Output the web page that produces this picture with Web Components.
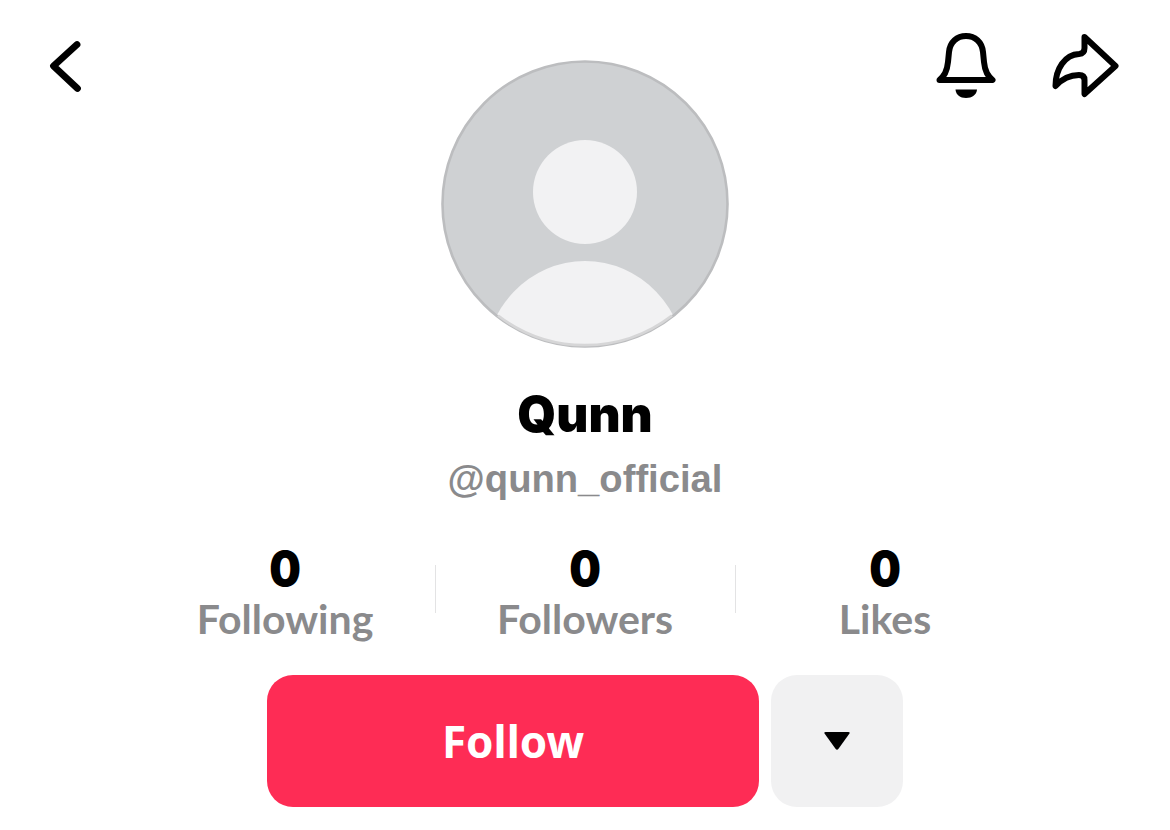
<!DOCTYPE html>
<html lang="en">
<head>
<meta charset="utf-8">
<title>Qunn</title>
<style>
    html, body { margin: 0; background: #fff; }
</style>
</head>
<body>
<profile-page>
    <profile-header slot="header"></profile-header>
    <profile-identity slot="identity" name="Qunn" handle="@qunn_official"></profile-identity>
    <profile-stats slot="stats">
        <stat-item count="0" label="Following"></stat-item>
        <stat-item count="0" label="Followers"></stat-item>
        <stat-item count="0" label="Likes"></stat-item>
    </profile-stats>
    <follow-actions slot="actions"></follow-actions>
</profile-page>
<script>
/**
 * Page shell, stacks the profile sections.
 */
class ProfilePage extends HTMLElement {
    constructor() {
        super();
        this.attachShadow({ mode: 'open' });
    }

    connectedCallback() {
        this.shadowRoot.innerHTML = `
            <style>
                :host {
                    display: flex;
                    flex-direction: column;
                    align-items: center;
                    width: 1170px;
                    height: 830px;
                    overflow: hidden;
                }
            </style>
            <slot name="header"></slot>
            <slot name="identity"></slot>
            <slot name="stats"></slot>
            <slot name="actions"></slot>
        `;
    }
}

/**
 * Top area: back button, avatar, bell and share.
 */
class ProfileHeader extends HTMLElement {
    constructor() {
        super();
        this.attachShadow({ mode: 'open' });
    }

    connectedCallback() {
        this.shadowRoot.innerHTML = `
            <style>
                :host {
                    display: grid;
                    grid-template-columns: 1fr 288px 1fr;
                    width: 100%;
                    padding-top: 60px;
                }
                .left, .right {
                    display: flex;
                    margin-top: -60px;
                    height: 130px;
                }
                svg { display: block; overflow: visible; }
                .left { padding: 41px 0 0 49px; }
                .right { justify-content: flex-end; padding: 33px 50px 0 0; gap: 54px; }
                .avatar { width: 288px; height: 288px; display: block; }
            </style>
            <div class="left">
                <svg width="34" height="50" viewBox="0 0 34 50" fill="none" stroke="#000" stroke-width="6.8" stroke-linecap="round" stroke-linejoin="round" aria-label="Back">
                    <path d="M28 3.500 L4.500 25 L28.500 47.500"/>
                </svg>
            </div>
            <svg class="avatar" viewBox="0 0 288 288" aria-label="Avatar">
                <defs><clipPath id="c"><circle cx="144" cy="144" r="142.500"/></clipPath></defs>
                <circle cx="144" cy="144" r="142.500" fill="#cfd1d3"/>
                <g clip-path="url(#c)" fill="#f2f2f3">
                    <circle cx="144" cy="132" r="52"/>
                    <ellipse cx="144" cy="307" rx="101" ry="106"/>
                </g>
                <circle cx="144" cy="144" r="142.500" fill="none" stroke="#bcbdbf" stroke-width="2.600"/>
                <path d="M57 255.500 A142.500 142.500 0 0 0 231 255.500" fill="none" stroke="#d6d6d7" stroke-width="2.800"/>
            </svg>
            <div class="right">
                <svg width="62" height="66" viewBox="0 0 62 66" fill="none" aria-label="Notifications">
                    <path d="M3.500 47 C8 43 11 39 12 29 L13 19 C14 9 21 3 30 3 C39 3 46 9 47 19 L48 29 C49 39 52 43 56.500 47 Z" stroke="#000" stroke-width="6" stroke-linejoin="round"/>
                    <path d="M19.500 56.500 H41 C40.500 62 36 65 30 65 C24 65 20 62 19.500 56.500 Z" fill="#000"/>
                </svg>
                <svg width="68" height="66" viewBox="0 0 68 66" fill="none" stroke="#000" stroke-width="6" stroke-linejoin="round" stroke-linecap="round" aria-label="Share">
                    <path d="M32.500 4 L63.500 33 L32.500 61 L32.500 47 Q32.500 42 27 42 C17 42 9 47 3.500 53 C3.500 36 13 21.500 27 21 Q32.500 20.500 32.500 15 Z"/>
                </svg>
            </div>
        `;
    }
}

/**
 * Display name and handle.
 */
class ProfileIdentity extends HTMLElement {
    constructor() {
        super();
        this.attachShadow({ mode: 'open' });
    }

    connectedCallback() {
        this.shadowRoot.innerHTML = `
            <style>
                :host {
                    display: flex;
                    flex-direction: column;
                    align-items: center;
                    padding-top: 37px;
                }
                .name {
                    font: 900 49.500px/58px Inter, sans-serif;
                    color: #000;
                }
                .handle {
                    font: 700 38.200px/46px "Liberation Sans", sans-serif;
                    color: #8a8a8c;
                    margin-top: 13px;
                }
            </style>
            <div class="name">${this.getAttribute('name')}</div>
            <div class="handle">${this.getAttribute('handle')}</div>
        `;
    }
}

/**
 * Row of three counters.
 */
class ProfileStats extends HTMLElement {
    constructor() {
        super();
        this.attachShadow({ mode: 'open' });
    }

    connectedCallback() {
        this.shadowRoot.innerHTML = `
            <style>
                :host {
                    display: grid;
                    grid-template-columns: repeat(3, 300px);
                    margin-top: 40px;
                }
            </style>
            <slot></slot>
        `;
    }
}

/**
 * One counter with its label.
 */
class StatItem extends HTMLElement {
    constructor() {
        super();
        this.attachShadow({ mode: 'open' });
    }

    connectedCallback() {
        this.shadowRoot.innerHTML = `
            <style>
                :host {
                    display: flex;
                    flex-direction: column;
                    align-items: center;
                    position: relative;
                }
                :host(:not(:last-child))::after {
                    content: "";
                    position: absolute;
                    right: -1px;
                    top: 23px;
                    width: 1px;
                    height: 48px;
                    background: #e3e3e4;
                }
                .count {
                    font: 900 48px/54px Inter, sans-serif;
                    color: #000;
                    /* Inter's zero is wider than the one in the picture */
                    transform: scaleX(0.93);
                }
                .label {
                    font: 700 41px/42px Lato, sans-serif;
                    color: #8a8a8c;
                    margin-top: 2px;
                }
            </style>
            <div class="count">${this.getAttribute('count')}</div>
            <div class="label">${this.getAttribute('label')}</div>
        `;
    }
}

/**
 * Follow button and the dropdown next to it.
 */
class FollowActions extends HTMLElement {
    constructor() {
        super();
        this.attachShadow({ mode: 'open' });
    }

    connectedCallback() {
        this.shadowRoot.innerHTML = `
            <style>
                :host {
                    display: flex;
                    gap: 12px;
                    margin-top: 35px;
                }
                button {
                    border: none;
                    padding: 0;
                    height: 132px;
                    border-radius: 26px;
                    display: flex;
                    align-items: center;
                    justify-content: center;
                }
                .follow {
                    width: 492px;
                    background: #fe2c55;
                    color: #fff;
                    font: 700 44px/1 "Noto Sans", sans-serif;
                }
                .more { width: 132px; background: #f1f1f2; }
            </style>
            <button class="follow">Follow</button>
            <button class="more" aria-label="More">
                <svg width="28" height="20" viewBox="0 0 28 20">
                    <path d="M2.500 1 H25.500 Q27.500 1 26.300 2.800 L15.500 17.800 Q14 19.500 12.500 17.800 L1.700 2.800 Q0.500 1 2.500 1 Z" fill="#000"/>
                </svg>
            </button>
        `;
    }
}

customElements.define('profile-page', ProfilePage);
customElements.define('profile-header', ProfileHeader);
customElements.define('profile-identity', ProfileIdentity);
customElements.define('profile-stats', ProfileStats);
customElements.define('stat-item', StatItem);
customElements.define('follow-actions', FollowActions);
</script>
</body>
</html>
